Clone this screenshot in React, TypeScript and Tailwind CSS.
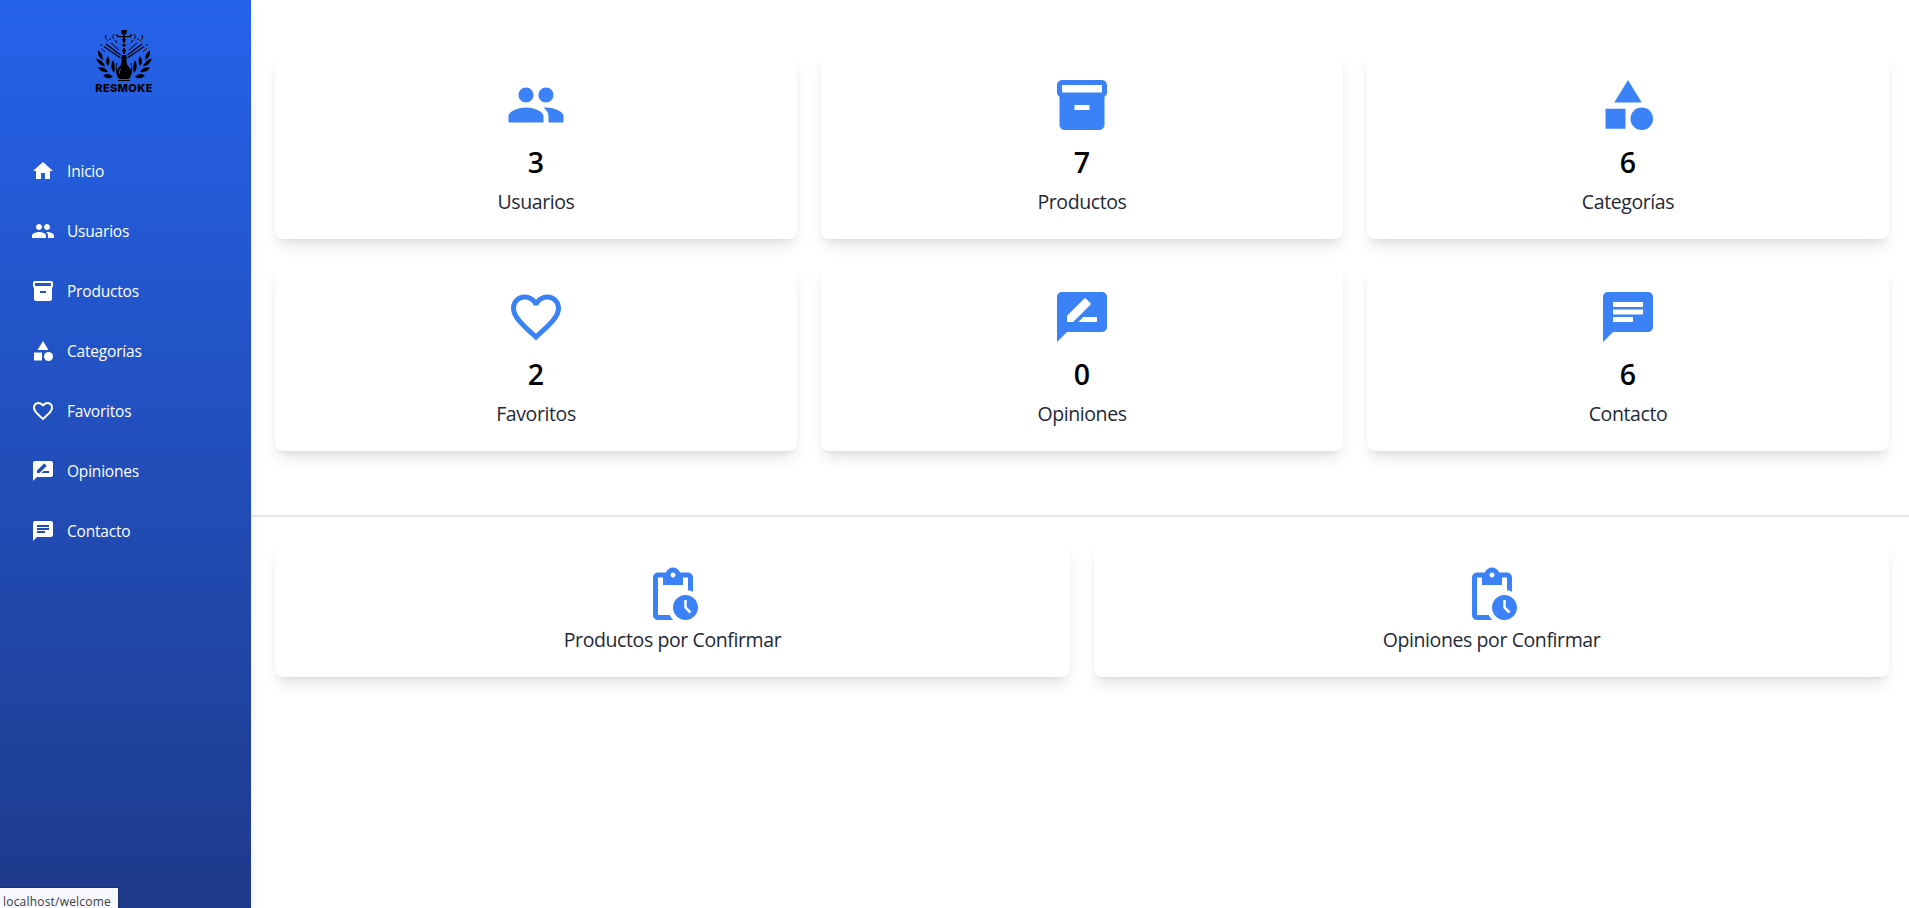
import type { IconType } from "react-icons";
import {
  MdCategory,
  MdChat,
  MdFavoriteBorder,
  MdHome,
  MdInventory2,
  MdPendingActions,
  MdPeople,
  MdRateReview,
} from "react-icons/md";

type Entry = { label: string; icon: IconType; count?: number };

const sections: Entry[] = [
  { label: "Usuarios", icon: MdPeople, count: 3 },
  { label: "Productos", icon: MdInventory2, count: 7 },
  { label: "Categorías", icon: MdCategory, count: 6 },
  { label: "Favoritos", icon: MdFavoriteBorder, count: 2 },
  { label: "Opiniones", icon: MdRateReview, count: 0 },
  { label: "Contacto", icon: MdChat, count: 6 },
];

const menu: Entry[] = [{ label: "Inicio", icon: MdHome }, ...sections];

const pending: Entry[] = [
  { label: "Productos por Confirmar", icon: MdPendingActions },
  { label: "Opiniones por Confirmar", icon: MdPendingActions },
];

// One side of the foliage around the hookah; the other side is its mirror.
function Foliage() {
  return (
    <g>
      <path d="M24.500 28 L8 16.500 M24.500 25 L10 14" strokeWidth="1.2" />
      <path d="M23 20 L15 13 M9 22 L5 18" strokeWidth="1" />
      <path d="M18 9q-3-2 0-5M12 11q-4-2-2-6M21 13l-2-3" strokeWidth="1" />
      <g fill="black" stroke="none">
        <path d="M7 30Q1 27 2 20Q7 24 7 30Z" />
        <path d="M9 36.500Q2 35 0 28.500Q7 30 9 36.500Z" />
        <path d="M12 42Q5 43 2 37.500Q9 36 12 42Z" />
        <path d="M17 47Q11 50 7 45.500Q13 42 17 47Z" />
        <path d="M12 36Q8 32 12 26Q15 31 12 36Z" />
        <path d="M18 43Q13 37 17 30Q20 36 18 43Z" />
        <circle cx="21" cy="5" r="0.9" />
        <circle cx="14" cy="9" r="0.8" />
        <circle cx="5" cy="15" r="0.8" />
      </g>
      <path d="M22 46q-3-5-1-13" strokeWidth="0.9" />
    </g>
  );
}

function Logo() {
  return (
    <div className="flex w-[58px] flex-col items-center">
      <svg viewBox="0 0 56 52" className="h-[52px] w-14" fill="none" stroke="black">
        <Foliage />
        <g transform="translate(56 0) scale(-1 1)">
          <Foliage />
        </g>
        <g fill="black" stroke="none">
          <path d="M25 0h6l-.8 4.500h-4.400z" />
          <path d="M21 6h14v1.200h-14z" />
          <path d="M27 5h2v8h-2zM26 9h4v1.500h-4zM26.500 14h3v2.500h-3zM27 18h2v6h-2zM26 20h4v1.500h-4z" />
          <path d="M25.500 25h5v7q0 3 3 5.500q2 2 2 5q0 4-2.500 6.500h-10q-2.500-2.500-2.500-6.500q0-3 2-5q3-2.500 3-5.500z" />
          <path d="M22 50h12v1h-12z" />
        </g>
        <path d="M24.500 39q-1.500 2-1 4.500" stroke="#2563eb" strokeWidth="1" />
      </svg>
      <span className="mt-px font-['Inter',sans-serif] text-[11px] leading-[10px] font-extrabold tracking-[0.35px] text-black">
        RESMOKE
      </span>
    </div>
  );
}

function Card({ label, icon: Icon, count }: Entry) {
  return (
    <div className="flex flex-col items-center rounded-lg bg-white px-6 pt-6 pb-[23px] shadow-lg">
      <Icon className="size-[60px] text-[#3b82f6]" />
      {count !== undefined && (
        <p className="mt-[9px] mb-[7px] text-[28.500px] leading-9 font-semibold text-black">{count}</p>
      )}
      <p className="pt-px text-[19.500px] leading-7 tracking-[-0.4px] text-[#1f2937]">{label}</p>
    </div>
  );
}

export default function App() {
  return (
    <div className="flex h-[908px] overflow-hidden bg-white font-['Open_Sans','Noto_Sans',sans-serif]">
      <aside className="z-10 flex w-[251px] shrink-0 flex-col bg-linear-to-b/srgb from-[#2563eb] to-[#1e3a8a] shadow-lg">
        <div className="flex justify-center pt-[30px] pr-[3px]">
          <Logo />
        </div>
        <nav className="mt-[54px] flex grow flex-col gap-3 pl-[31px]">
          {menu.map(({ label, icon: Icon }) => (
            <a key={label} className="flex h-12 items-center gap-3 text-white">
              <Icon className="size-6" />
              <span className="text-[15.500px] leading-6 tracking-[-0.2px]">{label}</span>
            </a>
          ))}
        </nav>
        <div className="flex h-[21px] w-[119px] items-end border-t border-r border-[#1b2f6b] bg-[#f8f9fc] pl-[3px] text-xs leading-[12px] tracking-[0.2px] whitespace-nowrap text-[#3c4043]">
          localhost/welcome
        </div>
      </aside>
      <main className="grow">
        <section className="grid grid-cols-3 gap-6 pt-[51px] pr-5 pb-16 pl-6">
          {sections.map((s) => (
            <Card key={s.label} {...s} />
          ))}
        </section>
        <hr className="border-t-2 border-[#e5e7eb]" />
        <section className="grid grid-cols-2 gap-6 pt-6 pr-5 pl-6">
          {pending.map((p) => (
            <Card key={p.label} {...p} />
          ))}
        </section>
      </main>
    </div>
  );
}
